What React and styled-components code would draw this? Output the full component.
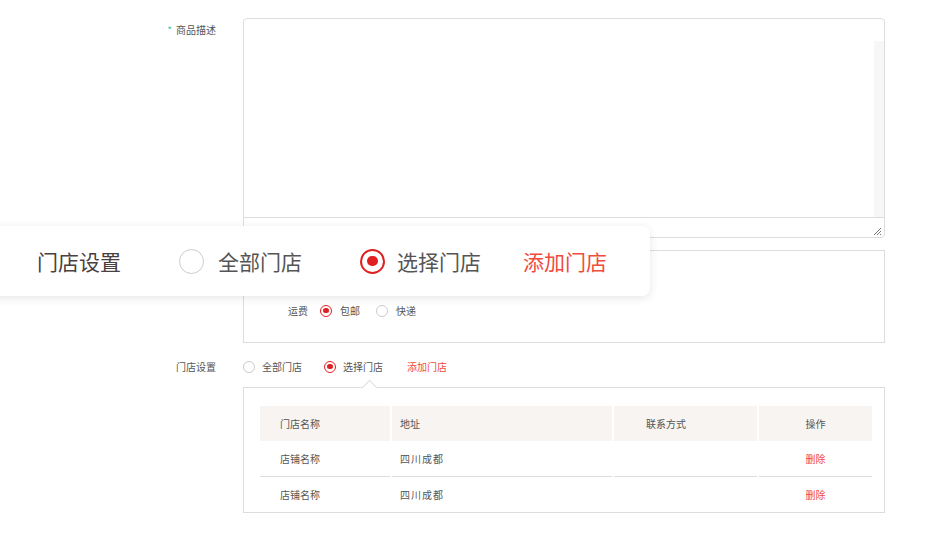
import React from 'react';
import styled, { createGlobalStyle } from 'styled-components';

const Global = createGlobalStyle`
  body { margin: 0; background: #fff; font-family: "Noto Sans CJK SC", "Noto Sans", sans-serif; }
`;

const Page = styled.div`
  position: relative;
  width: 928px;
  height: 553px;
  overflow: hidden;
  padding-top: 18px;
  box-sizing: border-box;
`;

const Row = styled.div`
  display: flex;
  align-items: ${p => p.$center ? 'center' : 'flex-start'};
  margin-bottom: ${p => p.$mb || 0}px;
`;

const Label = styled.div`
  width: 216px;
  text-align: right;
  font-size: 10px;
  color: #555;
  padding-top: ${p => p.$pt || 0}px;
  flex-shrink: 0;
  span { color: #3ccf9a; margin-right: 4px; }
`;

const Field = styled.div`
  margin-left: 27px;
  width: 642px;
`;

const TextArea = styled.div`
  position: relative;
  height: 220px;
  border: 1px solid #ddd;
  border-radius: 4px;
  box-sizing: border-box;
  &::before {
    content: '';
    position: absolute;
    right: 0; top: 22px; bottom: 20px;
    width: 10px;
    background: #f7f7f7;
  }
  &::after {
    content: '';
    position: absolute;
    right: 0; left: 0; bottom: 19px;
    border-top: 1px solid #ddd;
  }
`;

const Grip = styled.svg`
  position: absolute;
  right: 2px;
  bottom: 1px;
`;

const Box = styled.div`
  position: relative;
  border: 1px solid #ddd;
  box-sizing: border-box;
  height: ${p => p.$h}px;
  padding: ${p => p.$pad};
`;

const Options = styled.div`
  display: flex;
  align-items: center;
  gap: ${p => p.$gap || 8}px;
  font-size: ${p => p.$size || 10}px;
  color: #555;
`;

const Opt = styled.span`
  display: inline-flex;
  align-items: center;
  gap: ${p => p.$g || 7}px;
  margin-right: ${p => p.$mr || 0}px;
`;

const Radio = styled.span`
  width: ${p => p.$s}px;
  height: ${p => p.$s}px;
  border-radius: 50%;
  box-sizing: border-box;
  border: ${p => p.$on ? `${p.$s > 14 ? 2 : 1}px solid #e02020` : '1px solid #ccc'};
  display: inline-flex;
  align-items: center;
  justify-content: center;
  &::after {
    content: '';
    display: ${p => p.$on ? 'block' : 'none'};
    width: ${p => p.$s * 0.42}px;
    height: ${p => p.$s * 0.42}px;
    border-radius: 50%;
    background: #e02020;
  }
`;

const Link = styled.span`
  color: #f04b3d;
`;

const Arrow = styled.span`
  position: absolute;
  top: -6px;
  left: 120px;
  width: 10px;
  height: 10px;
  background: #fff;
  border-left: 1px solid #ddd;
  border-top: 1px solid #ddd;
  transform: rotate(45deg);
`;

const Table = styled.div`
  display: grid;
  grid-template-columns: 130px 220px 143px 113px;
  column-gap: 2px;
  font-size: 10px;
  color: #555;
`;

const Head = styled.div`
  background: #f7f4f1;
  height: 35px;
  display: flex;
  align-items: center;
  justify-content: ${p => p.$c ? 'center' : 'flex-start'};
  padding-left: ${p => p.$pl || 0}px;
`;

const Cell = styled.div`
  height: 35px;
  display: flex;
  align-items: center;
  justify-content: ${p => p.$c ? 'center' : 'flex-start'};
  padding-left: ${p => p.$pl || 0}px;
  border-bottom: ${p => p.$line ? '1px solid #ddd' : 'none'};
  color: ${p => p.$red ? '#f04b3d' : '#555'};
  letter-spacing: ${p => p.$ls || 0}px;
`;

const Callout = styled.div`
  position: absolute;
  left: -10px;
  top: 226px;
  width: 660px;
  height: 70px;
  background: #fff;
  border-radius: 8px;
  box-shadow: 0 2px 10px rgba(0,0,0,0.1);
  display: flex;
  align-items: center;
  padding-left: 47px;
  box-sizing: border-box;
`;

const CalloutLabel = styled.span`
  font-size: 21px;
  color: #4a4040;
  margin-right: 58px;
`;

const rows = [1, 2];

export default function App() {
  return (
    <Page>
      <Global />
      <Row $mb={12}>
        <Label $pt={4}><span>*</span>商品描述</Label>
        <Field>
          <TextArea>
            <Grip width="10" height="10" viewBox="0 0 10 10">
              <path d="M9 2L2 9M9 5L5 9M9 8L8 9" stroke="#777" strokeWidth="1" />
            </Grip>
          </TextArea>
        </Field>
      </Row>
      <Row $mb={16}>
        <Label />
        <Field>
          <Box $h={93} $pad="52px 0 0 44px">
            <Options>
              <span style={{ marginRight: 4 }}>运费</span>
              <Opt $g={8} $mr={8}><Radio $s={12} $on />包邮</Opt>
              <Opt $g={8}><Radio $s={12} />快递</Opt>
            </Options>
          </Box>
        </Field>
      </Row>
      <Row $center $mb={13}>
        <Label>门店设置</Label>
        <Field>
          <Options $gap={0}>
            <Opt $mr={14}><Radio $s={12} />全部门店</Opt>
            <Opt $mr={16}><Radio $s={12} $on />选择门店</Opt>
            <Link>添加门店</Link>
          </Options>
        </Field>
      </Row>
      <Row>
        <Label />
        <Field>
          <Box $h={126} $pad="18px 16px 0 16px">
            <Arrow />
            <Table>
              <Head $pl={20}>门店名称</Head>
              <Head $pl={8}>地址</Head>
              <Head $pl={32}>联系方式</Head>
              <Head $c>操作</Head>
              {rows.map(r => (
                <React.Fragment key={r}>
                  <Cell $pl={20} $line={r === 1}>店铺名称</Cell>
                  <Cell $pl={8} $line={r === 1} $ls={1}>四川成都</Cell>
                  <Cell $line={r === 1} />
                  <Cell $c $red $line={r === 1}>删除</Cell>
                </React.Fragment>
              ))}
            </Table>
          </Box>
        </Field>
      </Row>
      <Callout>
        <CalloutLabel>门店设置</CalloutLabel>
        <Options $gap={0} $size={21}>
          <Opt $g={14} $mr={50}><Radio $s={25} />全部门店</Opt>
          <Opt $g={12} $mr={34}><Radio $s={25} $on />选择门店</Opt>
          <Link>添加门店</Link>
        </Options>
      </Callout>
    </Page>
  );
}
